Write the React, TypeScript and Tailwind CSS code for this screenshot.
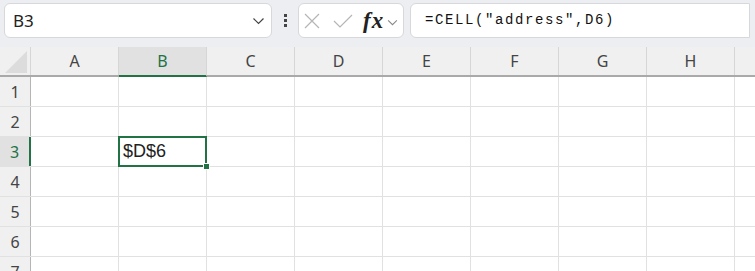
const cols = ["A", "B", "C", "D", "E", "F", "G", "H", ""];
const rows = [1, 2, 3, 4, 5, 6, 7];

const Chevron = ({ className }: { className?: string }) => (
  <svg viewBox="0 0 12 8" className={className} fill="none" stroke="currentColor" strokeWidth="1.2">
    <path d="M1 1.5l5 5 5-5" />
  </svg>
);

const Toolbar = () => (
  <div className="flex h-[47px] items-start bg-[#eceef1] px-[4px] pt-[3px]">
    <div className="flex h-[35px] w-[268px] items-center justify-between rounded-[6px] border border-[#d6d8db] bg-white pl-[8px] pr-[6px]">
      <span className="text-[17px] text-[#222]">B3</span>
      <Chevron className="h-[8px] w-[13px] text-[#444]" />
    </div>
    <div className="flex h-[35px] w-[26px] flex-col items-center justify-center gap-[2px]">
      <span className="h-[3px] w-[3px] bg-[#444]" />
      <span className="h-[3px] w-[3px] bg-[#444]" />
      <span className="h-[3px] w-[3px] bg-[#444]" />
    </div>
    <div className="flex h-[35px] w-[106px] items-center rounded-[6px] border border-[#d6d8db] bg-white pl-[5px]">
      <svg viewBox="0 0 16 16" className="h-[16px] w-[16px] text-[#b5b5b5]" fill="none" stroke="currentColor" strokeWidth="1.2">
        <path d="M1 1l14 14M15 1L1 15" />
      </svg>
      <svg viewBox="0 0 20 14" className="ml-[13px] h-[14px] w-[20px] text-[#b5b5b5]" fill="none" stroke="currentColor" strokeWidth="1.2">
        <path d="M1 7l6 6L19 1" />
      </svg>
      <span className="ml-[10px] font-['Liberation_Serif',serif] text-[23px] font-semibold italic leading-none tracking-[1px] text-[#222]">
        fx
      </span>
      <Chevron className="ml-[3px] mt-[3px] h-[7px] w-[11px] text-[#888]" />
    </div>
    <div className="ml-[6px] mr-[1px] flex h-[35px] flex-1 items-center rounded-l-[6px] border border-[#d6d8db] bg-white pl-[14px]">
      <span className="font-['Liberation_Mono',monospace] text-[14px] tracking-[1.6px] text-[#111]">
        =CELL("address",D6)
      </span>
    </div>
  </div>
);

const Grid = () => (
  <div className="font-['Noto_Sans','Liberation_Sans',sans-serif]">
    <div className="flex h-[30px] border-b-2 border-[#a9a9a9] bg-[#f0f0f0]">
      <div className="relative w-[31px] shrink-0 border-r border-[#d6d6d6]">
        <svg viewBox="0 0 22 22" className="absolute bottom-[2px] right-[3px] h-[22px] w-[22px]">
          <path d="M22 0V22H0Z" fill="#dcdcdc" />
        </svg>
      </div>
      {cols.map((c, i) => (
        <div
          key={i}
          className={
            c === "B"
              ? "-mb-[2px] flex w-[88px] shrink-0 items-center justify-center border-b-2 border-r border-[#217346] border-r-[#d6d6d6] bg-[#e1e1e1] text-[16px] text-[#217346]"
              : "flex w-[88px] shrink-0 items-center justify-center border-r border-[#d6d6d6] text-[16px] text-[#444]"
          }
        >
          {c}
        </div>
      ))}
    </div>
    {rows.map((r) => (
      <div key={r} className="flex h-[30px] border-b border-[#e1e1e1]">
        <div
          className={
            r === 3
              ? "flex w-[31px] shrink-0 items-center justify-center border-r-2 border-[#217346] bg-[#e1e1e1] text-[16px] text-[#217346]"
              : "flex w-[31px] shrink-0 items-center justify-center border-r border-[#b5b5b5] bg-[#f0f0f0] text-[16px] text-[#444]"
          }
        >
          {r}
        </div>
        {cols.map((c, i) => (
          <div key={i} className="relative w-[88px] shrink-0 border-r border-[#e1e1e1] bg-white">
            {r === 3 && c === "B" && (
              <>
                <div className="absolute -left-px -top-px bottom-[-1px] right-[-1px] z-10 flex items-center border-2 border-[#217346] pl-[3px] font-['Liberation_Sans',sans-serif] text-[18px] text-[#222]">
                  $D$6
                </div>
                <div className="absolute -bottom-[4px] -right-[4px] z-20 h-[7px] w-[7px] border border-white bg-[#217346]" />
              </>
            )}
          </div>
        ))}
      </div>
    ))}
  </div>
);

const App = () => {
  return (
    <div className="h-[271px] w-[755px] overflow-hidden bg-white font-['Noto_Sans','Liberation_Sans',sans-serif]">
      <Toolbar />
      <Grid />
    </div>
  );
};

export default App;
